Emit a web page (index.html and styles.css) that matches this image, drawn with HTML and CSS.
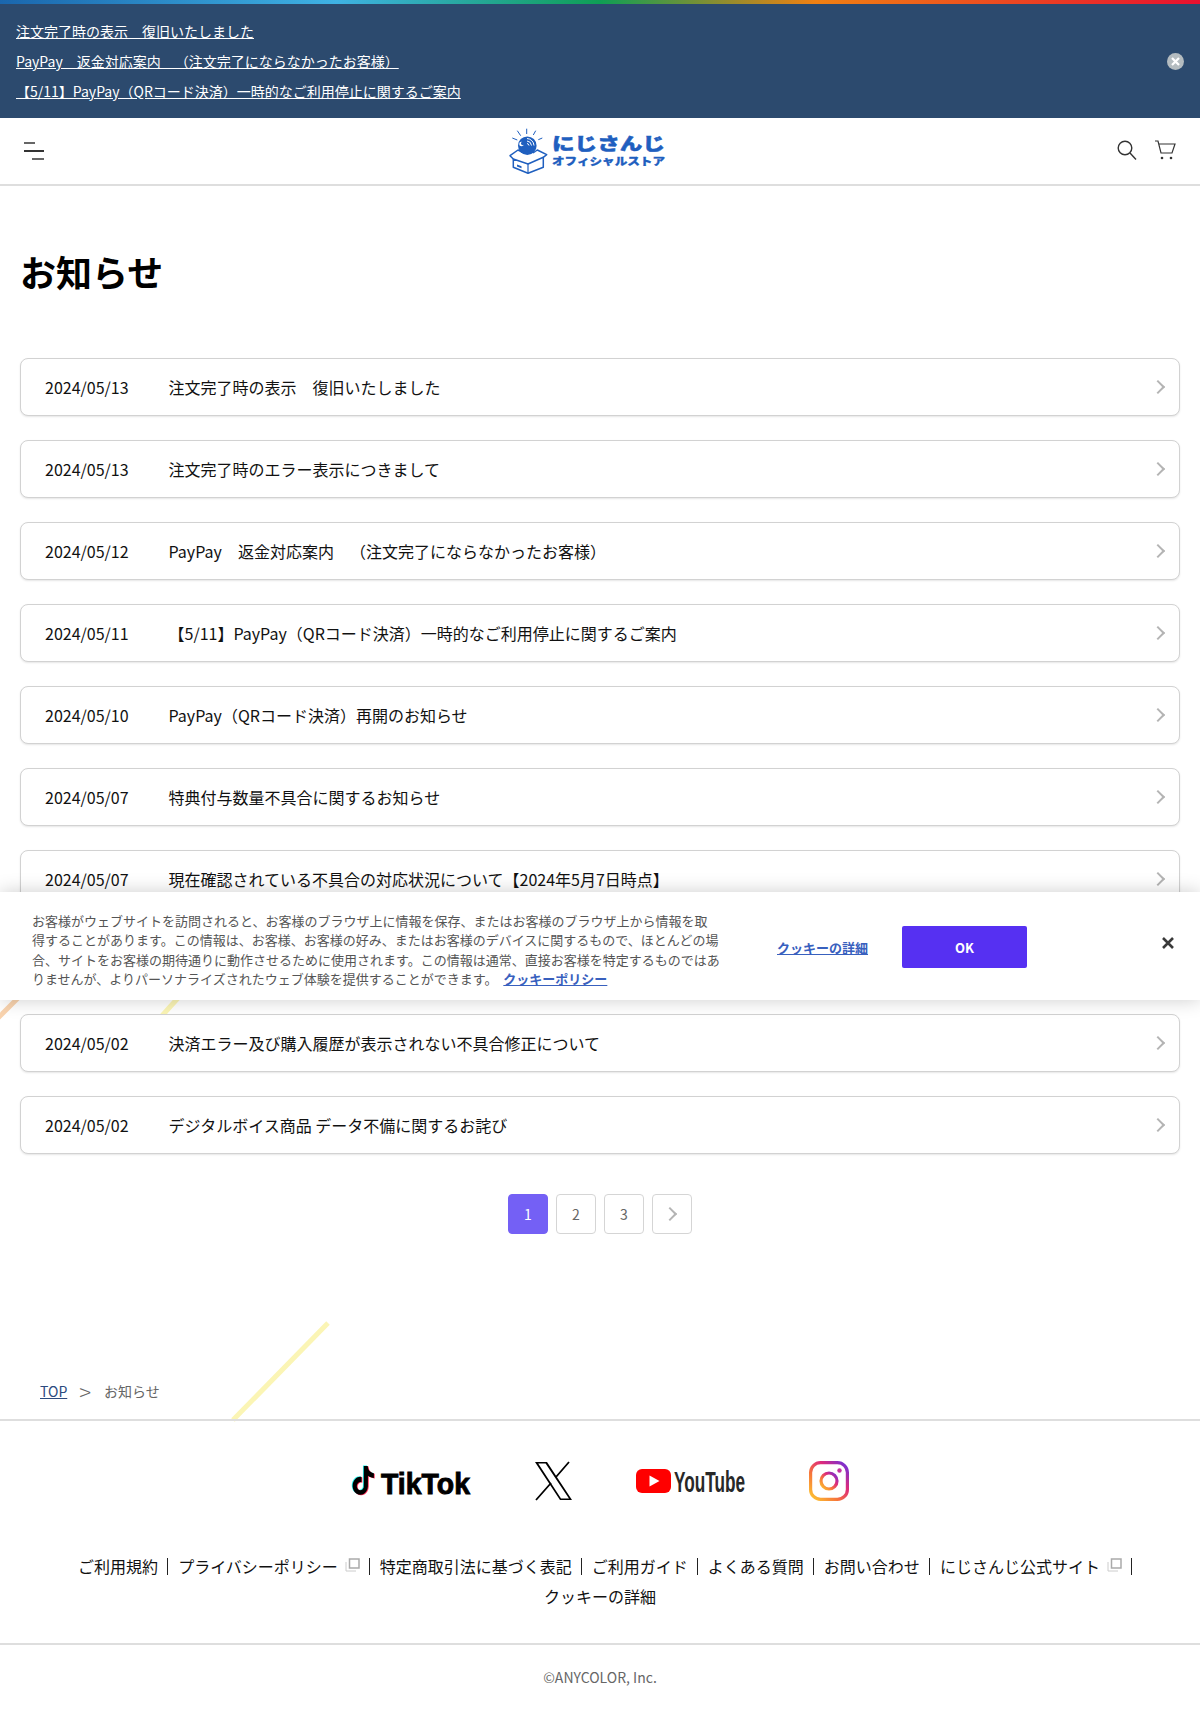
FILE: index.html
```html
<!DOCTYPE html>
<html lang="ja">
<head>
<meta charset="utf-8">
<title>お知らせ</title>
<link rel="stylesheet" href="styles.css">
</head>
<body>
<svg class="decor" viewBox="0 0 1200 1711" aria-hidden="true">
  <line x1="18" y1="998" x2="-6" y2="1022" class="decor-orange"/>
  <line x1="178" y1="998" x2="160" y2="1018" class="decor-yellow"/>
  <line x1="328" y1="1323" x2="233" y2="1420" class="decor-yellow"/>
</svg>
<div class="rainbow"></div>
<section class="notice">
  <div class="notice-links">
    <a href="#">注文完了時の表示　復旧いたしました</a>
    <a href="#">PayPay　返金対応案内　&#8203;（注文完了にならなかったお客様）</a>
    <a href="#">【5/11】PayPay（QRコード決済）一時的なご利用停止に関するご案内</a>
  </div>
  <svg class="notice-close" viewBox="0 0 17 17" width="17" height="17"><circle cx="8.5" cy="8.5" r="8.5" fill="#b4bcc0"/><path d="M5 5l7 7M12 5l-7 7" stroke="#fff" stroke-width="2.2"/></svg>
</section>
<header class="site-header">
  <div class="burger"><span class="b1"></span><span class="b2"></span><span class="b3"></span></div>
  <svg class="logo" viewBox="0 0 160 50" width="160" height="50">
    <path d="M20.700 2.700V8M11.300 4.700l3.400 5M29.700 4.700L27.300 9M6.300 12l5 2M36.300 12l-4 1.700" stroke="#1f5fbf" stroke-width="1" fill="none"/>
    <path d="M7.300 33L4 29.700 12 24l6 3M37.300 31.300l3.400-2.600L31.300 24l-4.300 3" fill="#fff" stroke="#1f5fbf" stroke-width="1.500" stroke-linejoin="round"/>
    <circle cx="21.300" cy="19.700" r="9.300" fill="#1f5fbf"/>
    <circle cx="15.500" cy="18" r="2.300" fill="#fff"/>
    <circle cx="16.800" cy="17.400" r="1.800" fill="#1f5fbf"/>
    <path d="M21 12.500a7.500 7.500 0 0 1 7 7M21 15a5 5 0 0 1 4.500 4.500M21 17.500a2.500 2.500 0 0 1 2 2" stroke="#fff" stroke-width="1" fill="none"/>
    <path d="M7.300 33L22 38l15.300-6.700v10L22 47.300 7.300 41.300z" fill="#fff" stroke="#1f5fbf" stroke-width="1.500" stroke-linejoin="round"/>
    <path d="M22 38v9.300" stroke="#1f5fbf" stroke-width="1.200"/>
    <path d="M11 38.500l4.500 1.700v2l-4.500-1.700z" fill="#1f5fbf"/>
    <text x="46" y="24" class="logo-big" textLength="113" lengthAdjust="spacingAndGlyphs">にじさんじ</text>
    <text x="46" y="39" class="logo-small" textLength="113" lengthAdjust="spacingAndGlyphs">オフィシャルストア</text>
  </svg>
  <div class="header-icons">
    <svg viewBox="0 0 20 20" width="20" height="20"><circle cx="8" cy="8" r="6.800" fill="none" stroke="#333" stroke-width="1.400"/><path d="M13 13l6 6.500" stroke="#333" stroke-width="1.400"/></svg>
    <svg viewBox="0 0 22 20" width="22" height="20"><path d="M1 1h3l3 12h11l3-9H5" fill="none" stroke="#333" stroke-width="1.200"/><circle cx="8" cy="18" r="1.300" fill="#333"/><circle cx="17" cy="18" r="1.300" fill="#333"/></svg>
  </div>
</header>
<main class="page">
  <h1 class="page-title">お知らせ</h1>
  <ul class="news">
    <li class="news-row"><span class="news-date">2024/05/13</span><span>注文完了時の表示　復旧いたしました</span><i class="chev"></i></li>
    <li class="news-row"><span class="news-date">2024/05/13</span><span>注文完了時のエラー表示につきまして</span><i class="chev"></i></li>
    <li class="news-row"><span class="news-date">2024/05/12</span><span>PayPay　返金対応案内　&#8203;（注文完了にならなかったお客様）</span><i class="chev"></i></li>
    <li class="news-row"><span class="news-date">2024/05/11</span><span>【5/11】PayPay（QRコード決済）一時的なご利用停止に関するご案内</span><i class="chev"></i></li>
    <li class="news-row"><span class="news-date">2024/05/10</span><span>PayPay（QRコード決済）再開のお知らせ</span><i class="chev"></i></li>
    <li class="news-row"><span class="news-date">2024/05/07</span><span>特典付与数量不具合に関するお知らせ</span><i class="chev"></i></li>
    <li class="news-row"><span class="news-date">2024/05/07</span><span>現在確認されている不具合の対応状況について【2024年5月7日時点】</span><i class="chev"></i></li>
    <li class="news-row"><span class="news-date">2024/05/02</span><span></span><i class="chev"></i></li>
    <li class="news-row"><span class="news-date">2024/05/02</span><span>決済エラー及び購入履歴が表示されない不具合修正について</span><i class="chev"></i></li>
    <li class="news-row"><span class="news-date">2024/05/02</span><span>デジタルボイス商品 データ不備に関するお詫び</span><i class="chev"></i></li>
  </ul>
  <nav class="pager">
    <a class="pg pg-on" href="#">1</a>
    <a class="pg" href="#">2</a>
    <a class="pg" href="#">3</a>
    <a class="pg" href="#"><i class="chev chev-pg"></i></a>
  </nav>
  <div class="crumbs"><a href="#">TOP</a><span class="crumb-sep">&gt;</span><span>お知らせ</span></div>
</main>
<footer class="site-footer">
  <div class="socials">
    <svg class="sns-tiktok" viewBox="0 0 122 34" width="122" height="34">
      <g transform="translate(1 2) scale(1.02 1.2)">
        <path fill="#25f4ee" transform="translate(-.8 -.4)" d="M12.525.02c1.31-.02 2.61-.01 3.91-.02.08 1.53.63 3.09 1.75 4.17 1.12 1.11 2.7 1.62 4.24 1.79v4.03c-1.44-.05-2.89-.35-4.2-.97-.57-.26-1.1-.59-1.62-.93-.01 2.92.01 5.84-.02 8.75-.08 1.4-.54 2.79-1.35 3.94-1.31 1.92-3.58 3.17-5.91 3.21-1.43.08-2.86-.31-4.08-1.03-2.02-1.19-3.44-3.37-3.65-5.71-.02-.5-.03-1-.01-1.49.18-1.9 1.12-3.72 2.58-4.96 1.66-1.44 3.98-2.13 6.15-1.72.02 1.48-.04 2.96-.04 4.44-.99-.32-2.15-.23-3.02.37-.63.41-1.11 1.04-1.36 1.75-.21.51-.15 1.07-.14 1.61.24 1.64 1.82 3.02 3.5 2.87 1.12-.01 2.19-.66 2.77-1.61.19-.33.4-.67.41-1.06.1-1.79.06-3.57.07-5.36.01-4.03-.01-8.05.02-12.07z"/>
        <path fill="#fe2c55" transform="translate(.8 .4)" d="M12.525.02c1.31-.02 2.61-.01 3.91-.02.08 1.53.63 3.09 1.75 4.17 1.12 1.11 2.7 1.62 4.24 1.79v4.03c-1.44-.05-2.89-.35-4.2-.97-.57-.26-1.1-.59-1.62-.93-.01 2.92.01 5.84-.02 8.75-.08 1.4-.54 2.79-1.35 3.94-1.31 1.92-3.58 3.17-5.91 3.21-1.43.08-2.86-.31-4.08-1.03-2.02-1.19-3.44-3.37-3.65-5.71-.02-.5-.03-1-.01-1.49.18-1.9 1.12-3.72 2.58-4.96 1.66-1.44 3.98-2.13 6.15-1.72.02 1.48-.04 2.96-.04 4.44-.99-.32-2.15-.23-3.02.37-.63.41-1.11 1.04-1.36 1.75-.21.51-.15 1.07-.14 1.61.24 1.64 1.82 3.02 3.5 2.87 1.12-.01 2.19-.66 2.77-1.61.19-.33.4-.67.41-1.06.1-1.79.06-3.57.07-5.36.01-4.03-.01-8.05.02-12.07z"/>
        <path fill="#000" d="M12.525.02c1.31-.02 2.61-.01 3.91-.02.08 1.53.63 3.09 1.75 4.17 1.12 1.11 2.7 1.62 4.24 1.79v4.03c-1.44-.05-2.89-.35-4.2-.97-.57-.26-1.1-.59-1.62-.93-.01 2.92.01 5.84-.02 8.75-.08 1.4-.54 2.79-1.35 3.94-1.31 1.92-3.58 3.17-5.91 3.21-1.43.08-2.86-.31-4.08-1.03-2.02-1.19-3.44-3.37-3.65-5.71-.02-.5-.03-1-.01-1.49.18-1.9 1.12-3.72 2.58-4.96 1.66-1.44 3.98-2.13 6.15-1.72.02 1.48-.04 2.96-.04 4.44-.99-.32-2.15-.23-3.02.37-.63.41-1.11 1.04-1.36 1.75-.21.51-.15 1.07-.14 1.61.24 1.64 1.82 3.02 3.5 2.87 1.12-.01 2.19-.66 2.77-1.61.19-.33.4-.67.41-1.06.1-1.79.06-3.57.07-5.36.01-4.03-.01-8.05.02-12.07z"/>
      </g>
      <text x="31" y="30" class="tiktok-text" textLength="89" lengthAdjust="spacingAndGlyphs">TikTok</text>
    </svg>
    <svg class="sns-x" viewBox="0 0 38 38" width="38" height="38">
      <path fill-rule="evenodd" d="M0 0h12l25 38H25zM3.200 1.600l22.800 34.800h8L10.600 1.600z"/>
      <path d="M34 0L21 15M16 21L1 38" stroke="#000" stroke-width="1.800" fill="none"/>
    </svg>
    <svg class="sns-yt" viewBox="0 0 110 26" width="110" height="26">
      <rect x="0" y="1" width="35" height="24" rx="6" fill="#f00"/>
      <path d="M13.500 7.500l10 5.500-10 5.500z" fill="#fff"/>
      <text x="38" y="24" class="yt-text" textLength="71" lengthAdjust="spacingAndGlyphs">YouTube</text>
    </svg>
    <svg class="sns-ig" viewBox="0 0 40 40" width="40" height="40">
      <defs><linearGradient id="ig" x1="0" y1="1" x2="1" y2="0"><stop offset="0" stop-color="#fdc830"/><stop offset=".35" stop-color="#f7773a"/><stop offset=".65" stop-color="#dd2a7b"/><stop offset="1" stop-color="#6a30e0"/></linearGradient></defs>
      <rect x="1.600" y="1.600" width="36.800" height="36.800" rx="10" fill="none" stroke="url(#ig)" stroke-width="3.200"/>
      <circle cx="20" cy="20" r="8" fill="none" stroke="url(#ig)" stroke-width="3.200"/>
      <circle cx="30.500" cy="9.500" r="2.200" fill="#c42fa0"/>
    </svg>
  </div>
  <ul class="foot-links">
    <li>ご利用規約</li>
    <li>プライバシーポリシー<svg class="ext" viewBox="0 0 15 14" width="15" height="14"><path d="M1 4v9h10" fill="none" stroke="#ccc" stroke-width="1"/><rect x="4.500" y="1" width="9.500" height="9" fill="#fff" stroke="#aaa" stroke-width="1.500"/></svg></li>
    <li>特定商取引法に基づく表記</li>
    <li>ご利用ガイド</li>
    <li>よくある質問</li>
    <li>お問い合わせ</li>
    <li>にじさんじ公式サイト<svg class="ext" viewBox="0 0 15 14" width="15" height="14"><path d="M1 4v9h10" fill="none" stroke="#ccc" stroke-width="1"/><rect x="4.500" y="1" width="9.500" height="9" fill="#fff" stroke="#aaa" stroke-width="1.500"/></svg></li>
    <li class="foot-last">クッキーの詳細</li>
  </ul>
  <p class="copy">©ANYCOLOR, Inc.</p>
</footer>
<aside class="cookie">
  <p class="cookie-text">お客様がウェブサイトを訪問されると、お客様のブラウザ上に情報を保存、またはお客様のブラウザ上から情報を取得することがあります。この情報は、お客様、お客様の好み、またはお客様のデバイスに関するもので、ほとんどの場合、サイトをお客様の期待通りに動作させるために使用されます。この情報は通常、直接お客様を特定するものではありませんが、よりパーソナライズされたウェブ体験を提供することができます。 <a href="#" class="cookie-link cookie-policy">クッキーポリシー</a></p>
  <a href="#" class="cookie-link cookie-detail">クッキーの詳細</a>
  <button class="cookie-ok">OK</button>
  <svg class="cookie-close" viewBox="0 0 12 12" width="12" height="12"><path d="M1 1l10 10M11 1L1 11" stroke="#3a3a3a" stroke-width="2.600"/></svg>
</aside>
</body>
</html>
```
FILE: styles.css
```css
* { box-sizing: border-box; }
html, body { margin: 0; padding: 0; }
body {
  position: relative;
  height: 1711px;
  overflow: hidden;
  background: #fff;
  color: #111;
  font-family: "Noto Sans CJK JP", "Noto Sans", sans-serif;
  font-size: 16px;
}
a { color: inherit; }
ul { list-style: none; margin: 0; padding: 0; }

.decor { position: absolute; left: 0; top: 0; width: 1200px; height: 1711px; pointer-events: none; }
.decor-orange { stroke: #f9d3ae; stroke-width: 5; }
.decor-yellow { stroke: #fbf5b5; stroke-width: 5; }

.rainbow {
  height: 4px;
  background: linear-gradient(90deg, #1a66ad 0%, #3fb2e4 28%, #0f9e55 50%, #f08012 68%, #e8102f 100%);
}
.notice {
  height: 114px;
  padding: 12px 16px 12px 16px;
  background: #2c4a6e;
  display: flex;
  align-items: center;
  justify-content: space-between;
}
.notice-links { display: flex; flex-direction: column; align-items: flex-start; }
.notice-links a { color: #fff; font-size: 14px; line-height: 30px; }
.notice-close { display: block; }

.site-header {
  position: relative;
  height: 68px;
  border-bottom: 2px solid #dedede;
  padding: 0 24px 0 24px;
  display: flex;
  align-items: center;
  justify-content: space-between;
}
.burger { width: 20px; display: flex; flex-direction: column; gap: 6px; }
.burger span { display: block; height: 2px; background: #666; }
.b1 { width: 11px; }
.burger .b2 { width: 20px; background: #333; }
.b3 { width: 12px; margin-left: 8px; }
.logo { display: block; margin-left: 10px; }
.logo-big { font-size: 17px; font-weight: 900; fill: #1f5fbf; stroke: #1f5fbf; stroke-width: .5; }
.logo-small { font-size: 10.5px; font-weight: 900; fill: #1f5fbf; stroke: #1f5fbf; stroke-width: .3; }
.header-icons { display: flex; gap: 17px; align-items: center; margin-top: -2px; }

.page { position: relative; padding: 0 20px; }
.page-title { margin: 0; padding-top: 59px; height: 172px; font-size: 36px; line-height: 52px; font-weight: 700; color: #000; }
.news { display: flex; flex-direction: column; gap: 24px; }
.news-row {
  position: relative;
  height: 58px;
  padding: 0 24px;
  border: 1px solid #d2d2d2;
  border-radius: 8px;
  background: #fff;
  box-shadow: 0 1px 2px rgba(0,0,0,.1);
  display: flex;
  align-items: center;
  line-height: 24px;
}
.news-date { width: 123.5px; flex: none; }
.chev {
  display: block;
  width: 10px;
  height: 10px;
  border-top: 2px solid #b4b4b4;
  border-right: 2px solid #b4b4b4;
  transform: rotate(45deg);
}
.news-row .chev { position: absolute; right: 16px; top: 23px; }
.pager { display: flex; justify-content: center; gap: 8px; margin-top: 40px; }
.pg {
  width: 40px;
  height: 40px;
  border: 1px solid #d5d5d5;
  border-radius: 4px;
  display: flex;
  align-items: center;
  justify-content: center;
  color: #666;
  font-size: 14px;
  text-decoration: none;
}
.pg-on { background: #7460f5; border-color: #7460f5; color: #fff; }
.chev-pg { margin-left: -5px; }
.crumbs {
  margin-top: 145px;
  padding-left: 20px;
  font-size: 14px;
  line-height: 24px;
  color: #666;
  display: flex;
  align-items: center;
}
.crumbs a { color: #2c4a7e; }
.crumb-sep { margin: 0 13px 0 12px; font-size: 22px; font-weight: 200; line-height: 24px; }

.site-footer { position: absolute; left: 0; right: 0; top: 1419px; border-top: 2px solid #dedede; }
.socials { height: 119px; display: flex; align-items: center; justify-content: center; gap: 63px; padding-right: 2px; }
.socials svg { display: block; overflow: visible; }
.tiktok-text { font-family: "Liberation Sans", sans-serif; font-size: 30px; font-weight: 700; fill: #000; stroke: #000; stroke-width: .9; }
.yt-text { font-family: "Liberation Sans", sans-serif; font-size: 30px; font-weight: 700; fill: #282828; }
.foot-links {
  display: flex;
  flex-wrap: wrap;
  justify-content: center;
  align-content: flex-start;
  padding: 11px 20px 0;
  line-height: 30px;
  height: 103px;
}
.foot-links li { position: relative; padding: 0 10px; display: flex; align-items: center; height: 30px; }
.foot-links li::after { content: ""; position: absolute; right: 0; top: 7px; height: 17px; width: 1px; background: #222; }
.foot-links li.foot-last::after { display: none; }
.ext { margin: -2px 0 0 7px; }
.copy { margin: 0; border-top: 2px solid #dedede; text-align: center; color: #666; font-size: 14px; line-height: 20px; padding-top: 22px; }

.cookie {
  position: absolute;
  left: 0;
  right: 0;
  top: 892px;
  height: 108px;
  background: #fff;
  box-shadow: 0 0 18px rgba(0,0,0,.2);
  display: flex;
  align-items: center;
  padding: 0 0 0 32px;
}
.cookie-text { margin: 7px 0 0; width: 688px; flex: none; font-size: 13px; line-height: 19.5px; color: #555; }
.cookie-link { color: #3860be; font-weight: 700; }
.cookie-policy { margin-left: 3px; }
.cookie-detail { margin: 2px 0 0 57px; font-size: 13px; }
.cookie-ok {
  width: 125px;
  height: 42px;
  margin: 2px 0 0 34px;
  border: 0;
  border-radius: 2px;
  background: #5630f2;
  color: #fff;
  font-family: inherit;
  font-size: 13px;
  font-weight: 700;
}
.cookie-close { margin: -6px 0 0 135px; display: block; }
```
